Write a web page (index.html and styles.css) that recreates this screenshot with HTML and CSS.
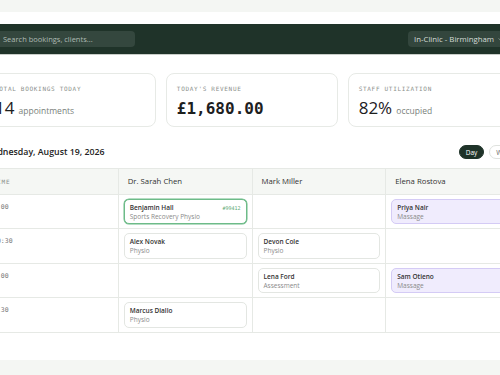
FILE: index.html
```html
<!DOCTYPE html>
<html lang="en">
<head>
    <meta charset="UTF-8">
    <meta name="viewport" content="width=device-width, initial-scale=1.0">
    <title>Clinic Bookings</title>
    <link rel="stylesheet" href="styles.css">
</head>
<body>
    <div class="app">
        <header class="topbar">
            <div class="topbar-inner">
                <label class="search">
                    <svg class="search-icon" viewBox="0 0 10 10" width="8" height="8">
                        <circle cx="4.2" cy="4.2" r="3" fill="none" stroke="#9fb0a7" stroke-width="1.2"/>
                        <path d="M6.5 6.5 L9 9" stroke="#9fb0a7" stroke-width="1.2" stroke-linecap="round"/>
                    </svg>
                    <input type="text" placeholder="Search bookings, clients...">
                </label>
                <div class="location">
                    <span>In-Clinic - Birmingham</span>
                    <svg class="caret" viewBox="0 0 6 4" width="5" height="3">
                        <path d="M0.6 0.6 L3 3 L5.4 0.6" fill="none" stroke="#9aa8a0" stroke-width="1"/>
                    </svg>
                </div>
            </div>
        </header>

        <main class="content">
            <section class="stats">
                <div class="stat-card">
                    <div class="stat-label">Total bookings today</div>
                    <div class="stat-value"><span class="num">14</span> <span class="unit">appointments</span></div>
                </div>
                <div class="stat-card">
                    <div class="stat-label">Today's revenue</div>
                    <div class="stat-value"><span class="num mono">£1,680.00</span></div>
                </div>
                <div class="stat-card">
                    <div class="stat-label">Staff utilization</div>
                    <div class="stat-value"><span class="num">82%</span> <span class="unit">occupied</span></div>
                </div>
            </section>

            <div class="toolbar">
                <h2 class="date">Wednesday, August 19, 2026</h2>
                <div class="view-toggle">
                    <button class="pill active">Day</button>
                    <button class="pill">Week</button>
                </div>
            </div>

            <table class="schedule">
                <thead>
                    <tr>
                        <th class="time-col">Time</th>
                        <th>Dr. Sarah Chen</th>
                        <th>Mark Miller</th>
                        <th>Elena Rostova</th>
                    </tr>
                </thead>
                <tbody>
                    <tr>
                        <td class="time-col">9:00</td>
                        <td>
                            <div class="booking selected">
                                <div class="booking-top">
                                    <span class="client">Benjamin Hall</span>
                                    <span class="ref">#99412</span>
                                </div>
                                <div class="service">Sports Recovery Physio</div>
                            </div>
                        </td>
                        <td></td>
                        <td>
                            <div class="booking massage">
                                <div class="client">Priya Nair</div>
                                <div class="service">Massage</div>
                            </div>
                        </td>
                    </tr>
                    <tr>
                        <td class="time-col">10:30</td>
                        <td>
                            <div class="booking">
                                <div class="client">Alex Novak</div>
                                <div class="service">Physio</div>
                            </div>
                        </td>
                        <td>
                            <div class="booking">
                                <div class="client">Devon Cole</div>
                                <div class="service">Physio</div>
                            </div>
                        </td>
                        <td></td>
                    </tr>
                    <tr>
                        <td class="time-col">1:00</td>
                        <td></td>
                        <td>
                            <div class="booking">
                                <div class="client">Lena Ford</div>
                                <div class="service">Assessment</div>
                            </div>
                        </td>
                        <td>
                            <div class="booking massage">
                                <div class="client">Sam Otieno</div>
                                <div class="service">Massage</div>
                            </div>
                        </td>
                    </tr>
                    <tr>
                        <td class="time-col">2:30</td>
                        <td>
                            <div class="booking">
                                <div class="client">Marcus Diallo</div>
                                <div class="service">Physio</div>
                            </div>
                        </td>
                        <td></td>
                        <td></td>
                    </tr>
                </tbody>
            </table>
        </main>
    </div>
</body>
</html>
```

FILE: styles.css
```css
* {
    box-sizing: border-box;
}

body {
    margin: 0;
    background-color: #f4f6f3;
    color: #222;
    font-family: 'Open Sans', sans-serif;
    overflow: hidden;
}

.app {
    margin-top: 12px;
    height: 348px;
    padding-top: 12px;
    background-color: #fff;
}

/* 상단 바 */
.topbar {
    height: 31px;
    background-color: #1f3329;
    border-bottom: 1px solid #c9cec9;
}

.topbar-inner {
    display: flex;
    justify-content: space-between;
    align-items: center;
    width: 536px;
    height: 30px;
    margin-left: -16px;
}

.search {
    display: flex;
    align-items: center;
    gap: 5px;
    width: 151px;
    height: 16px;
    padding-left: 6px;
    background-color: #34473e;
    border-radius: 4px;
}

.search input {
    flex: 1;
    min-width: 0;
    border: none;
    background: transparent;
    padding: 0;
    font-family: inherit;
    font-size: 7.5px;
    color: #dfe5e1;
    outline: none;
}

.search input::placeholder {
    color: #aebbb4;
}

.location {
    display: flex;
    align-items: center;
    gap: 4px;
    width: 112px;
    height: 16px;
    padding-left: 6px;
    background-color: #33463d;
    border-radius: 4px;
    font-size: 7.8px;
    color: #d5ddd8;
}

/* 본문 */
.content {
    width: 536px;
    margin-left: -16px;
    padding-top: 18px;
}

.stats {
    display: flex;
    gap: 9.5px;
}

.stat-card {
    flex: 1;
    height: 54px;
    padding: 11px 10px 0;
    border: 1px solid #e7eae6;
    border-radius: 8px;
}

.stat-label {
    font-family: 'DejaVu Sans Mono', monospace;
    font-size: 6px;
    line-height: 8px;
    letter-spacing: 0.7px;
    text-transform: uppercase;
    color: #8b908c;
}

.stat-value {
    margin-top: 5px;
    line-height: 20px;
    white-space: nowrap;
}

.stat-value .num {
    font-size: 17px;
    font-weight: 500;
    color: #1d201e;
}

.stat-value .num.mono {
    font-family: 'DejaVu Sans Mono', monospace;
    font-size: 16px;
    font-weight: bold;
}

.stat-value .unit {
    font-size: 8.5px;
    color: #7a7f7b;
}

.toolbar {
    display: flex;
    justify-content: space-between;
    align-items: center;
    height: 14px;
    margin-top: 18px;
}

.date {
    margin: 0;
    font-size: 8.8px;
    font-weight: 600;
    color: #222;
}

.view-toggle {
    display: flex;
    gap: 5px;
}

.pill {
    height: 14px;
    padding: 0 6px;
    border: 1px solid #dfe2de;
    border-radius: 7px;
    background-color: #fff;
    font-family: inherit;
    font-size: 6.5px;
    color: #666;
    cursor: pointer;
}

.pill.active {
    background-color: #1f3329;
    border-color: #1f3329;
    color: #fff;
}

/* 일정표 */
.schedule {
    width: 536px;
    margin-top: 9px;
    border-collapse: collapse;
    table-layout: fixed;
}

.schedule th,
.schedule td {
    border: 1px solid #e6e9e5;
}

.schedule th {
    height: 25.5px;
    padding: 0 9px;
    background-color: #f5f7f4;
    font-size: 7.75px;
    font-weight: normal;
    text-align: left;
    color: #333;
}

.schedule td {
    height: 34.5px;
    padding: 4px 5px;
    vertical-align: top;
}

.schedule .time-col {
    padding-left: 8px;
    font-family: 'DejaVu Sans Mono', monospace;
    font-size: 6.5px;
    color: #777;
}

.schedule th.time-col {
    font-size: 6px;
    letter-spacing: 0.7px;
    text-transform: uppercase;
    color: #8b908c;
}

.schedule td.time-col {
    padding-top: 8px;
}

.booking {
    height: 25.5px;
    padding: 3px 5px 0;
    border: 1px solid #e3e6e2;
    border-radius: 5px;
    background-color: #fff;
}

.booking.selected {
    border-color: #6dbb88;
    box-shadow: 0 0 0 0.5px #6dbb88;
}

.booking.massage {
    background-color: #f0ecfd;
    border-color: #d4cbf5;
}

.booking-top {
    display: flex;
    justify-content: space-between;
    align-items: baseline;
}

.client {
    font-size: 6.5px;
    line-height: 9px;
    font-weight: 600;
    color: #333;
}

.ref {
    font-family: 'DejaVu Sans Mono', monospace;
    font-size: 5px;
    color: #5aa973;
}

.service {
    font-size: 6.5px;
    line-height: 9px;
    color: #8a8a8a;
}
```
